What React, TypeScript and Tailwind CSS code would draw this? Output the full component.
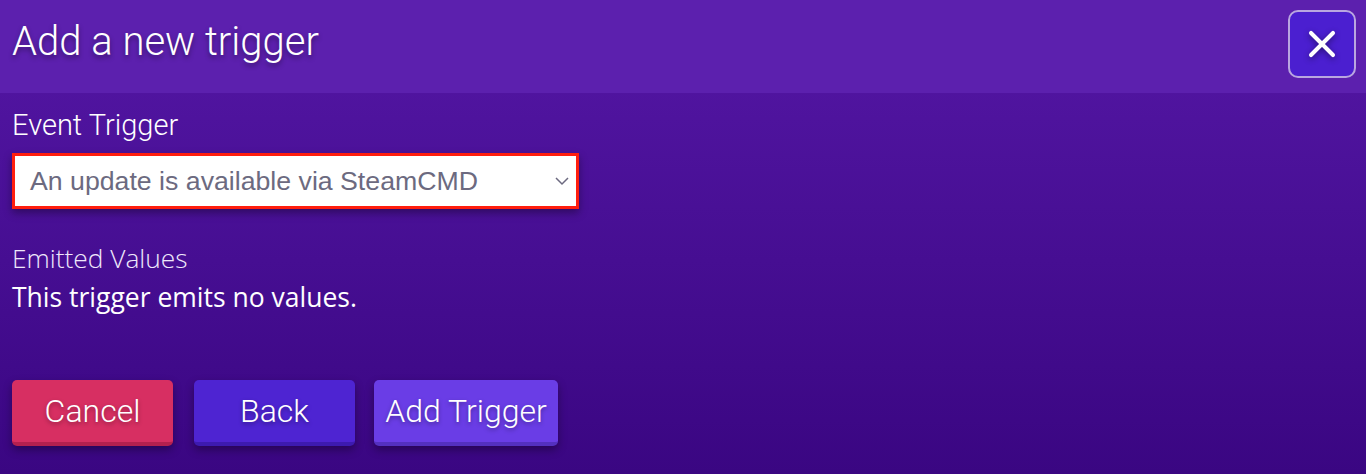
import { X } from "lucide-react";

const roboto = { fontFamily: "Roboto, 'Liberation Sans', sans-serif" };
const body = { fontFamily: "'Open Sans', Lato, sans-serif" };

function ActionButton({
  label,
  className = "",
}: {
  label: string;
  className?: string;
}) {
  return (
    <button
      className={`h-[66px] rounded-[5px] border-b-4 text-[32px] font-light text-white shadow-[0_4px_8px_rgba(0,0,0,0.35)] [text-shadow:0_2px_4px_rgba(0,0,0,0.35)] ${className}`}
      style={roboto}
    >
      {label}
    </button>
  );
}

export default function App() {
  return (
    <div className="flex h-[474px] w-full flex-col bg-gradient-to-b from-[#5517a6] to-[#3a0682] text-white">
      {/* Header */}
      <div className="flex h-[93px] items-start justify-between bg-[#5c20ae] pl-[12px] pr-[10px] pt-[10px]">
        <h1
          className="mt-[9px] text-[40px] font-light leading-[46px] [text-shadow:0_3px_5px_rgba(0,0,0,0.4)]"
          style={roboto}
        >
          Add a new trigger
        </h1>
        <button className="flex h-[68px] w-[68px] items-center justify-center rounded-[10px] border-2 border-[#b9a6e0] bg-[#4b1fd0]">
          <X className="h-[44px] w-[44px] drop-shadow-[0_2px_3px_rgba(0,0,0,0.45)]" strokeWidth={2.2} />
        </button>
      </div>

      {/* Body */}
      <div className="flex flex-col px-[12px] pt-[14px]">
        <label className="text-[29px] font-light leading-[36px]" style={roboto}>
          Event Trigger
        </label>
        <div className="mt-[10px] flex h-[56px] w-[567px] items-center justify-between border-[3px] border-[#ff1e0e] bg-white pl-[15px] pr-[6px] shadow-[0_4px_8px_rgba(0,0,0,0.35)]">
          <span
            className="text-[26.7px] text-[#6c6a80]"
            style={{ fontFamily: "'Liberation Sans', Arial, sans-serif" }}
          >
            An update is available via SteamCMD
          </span>
          <svg width="16" height="10" viewBox="0 0 16 10" fill="none" stroke="#6c6a80" strokeWidth="1.5">
            <path d="M2 2l6 6 6-6" />
          </svg>
        </div>

        <div className="mt-[32px] text-[26.3px] font-light leading-[34px] text-[#efe8fb]" style={body}>
          Emitted Values
        </div>
        <div className="mt-[5px] text-[26.5px] leading-[34px]" style={body}>
          This trigger emits no values.
        </div>

        <div className="mt-[66px] flex">
          <ActionButton label="Cancel" className="w-[161px] border-[#b4204f] bg-[#d72f62]" />
          <ActionButton label="Back" className="ml-[21px] w-[161px] border-[#3d1ab0] bg-[#4e24d2]" />
          <ActionButton label="Add Trigger" className="ml-[19px] w-[184px] border-[#5430c0] bg-[#6a3de6]" />
        </div>
      </div>
    </div>
  );
}
